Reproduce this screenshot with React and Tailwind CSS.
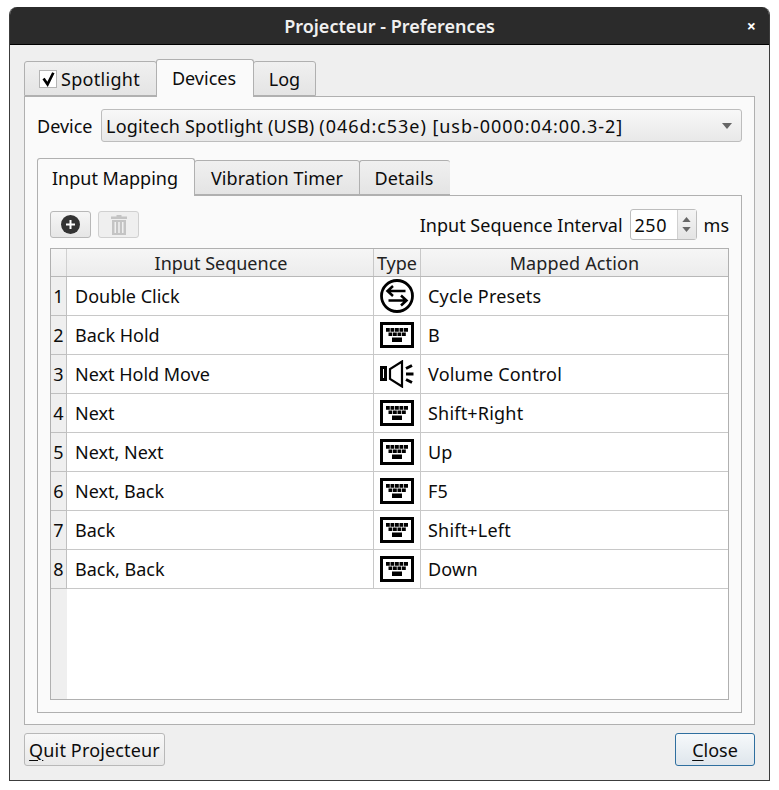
const FONT = "font-['Noto_Sans','Open_Sans',sans-serif]";

const ROWS = [
  { seq: "Double Click", type: "cycle", action: "Cycle Presets" },
  { seq: "Back Hold", type: "key", action: "B" },
  { seq: "Next Hold Move", type: "volume", action: "Volume Control" },
  { seq: "Next", type: "key", action: "Shift+Right" },
  { seq: "Next, Next", type: "key", action: "Up" },
  { seq: "Next, Back", type: "key", action: "F5" },
  { seq: "Back", type: "key", action: "Shift+Left" },
  { seq: "Back, Back", type: "key", action: "Down" },
];

function CycleIcon() {
  return (
    <svg width="34" height="34" viewBox="0 0 34 34" fill="none" stroke="#000">
      <circle cx="17" cy="17" r="15.500" strokeWidth="2.800" />
      <path d="M25.500 12H8M13 7l-5.500 5 5.500 5" strokeWidth="2.500" />
      <path d="M8.500 21.500H26M21 16.500l5.500 5-5.500 5" strokeWidth="2.500" />
    </svg>
  );
}

function KeyboardIcon() {
  return (
    <svg width="34" height="26" viewBox="0 0 34 26">
      <rect x="1.500" y="1.500" width="31" height="23" fill="none" stroke="#000" strokeWidth="3" />
      <path
        d="M6 6h3.800v3.800H6zM10.500 6h3.800v3.800h-3.800zM15 6h3.800v3.800H15zM19.500 6h3.800v3.800h-3.800zM24 6h4v3.800h-4zM8.500 10.500h3.800v3.500H8.500zM13 10.500h3.800v3.500H13zM17.500 10.500h3.800v3.500h-3.800zM22 10.500h3.800v3.500H22zM12 15.500h10V20H12z"
        fill="#000"
      />
    </svg>
  );
}

function VolumeIcon() {
  return (
    <svg width="34" height="28" viewBox="0 0 34 28" fill="none" stroke="#000">
      <rect x="1.500" y="7.500" width="4" height="12" strokeWidth="3" />
      <path d="M22 1.500v25L10 19V9z" strokeWidth="2.200" />
      <path d="m26 8.500 6-3M26 14h7.500M26 19.500l6 3" strokeWidth="3" />
    </svg>
  );
}

function TrashIcon() {
  return (
    <svg width="16" height="20" viewBox="0 0 16 20" fill="#c4c4c4">
      <path d="M5.500 0h5v1.500H16V4H0V1.500h5.500z" />
      <path d="M1 5h14v15H1zM3.500 7v11H5V7zm3.700 0v11h1.600V7zM11 7v11h1.500V7z" fillRule="evenodd" />
    </svg>
  );
}

function TypeIcon({ type }) {
  if (type === "cycle") return <CycleIcon />;
  if (type === "volume") return <VolumeIcon />;
  return <KeyboardIcon />;
}

function Tab({ active, children, className = "" }) {
  return (
    <div
      className={`flex items-center justify-center rounded-t-[3px] border border-[#b0b0b0] ${
        active
          ? "relative z-10 -mb-px border-b-0 bg-[#fafafa] pb-px"
          : "mt-[2px] bg-gradient-to-b from-[#f0f0f0] to-[#e4e4e4]"
      } ${className}`}
    >
      {children}
    </div>
  );
}

export default function App() {
  return (
    <div className={`h-[790px] w-[779px] bg-white pl-[9px] pt-[7px] text-[18px] leading-none text-[#0c0c0c] ${FONT}`}>
      <div className="flex h-[774px] w-[761px] flex-col overflow-hidden rounded-t-[8px] border-x border-b border-[#3c3c3c] bg-[#efefef]">
        {/* title bar */}
        <div className="relative -mx-px flex h-[38px] shrink-0 items-center justify-center border-b border-black bg-[#2b2b2b] text-[18px] font-semibold text-[#f0f0f0]">
          Projecteur - Preferences
          <span className="absolute right-[14px] top-[11px] text-[16px] font-bold text-white">×</span>
        </div>

        <div className="flex flex-1 flex-col px-[14px] pt-[14px]">
          {/* outer tabs */}
          <div className="flex h-[37px] shrink-0 items-stretch">
            <Tab className="w-[133px] gap-[4px] pt-px tracking-[0.3px]">
              <span className="-ml-[2px] flex h-[18px] w-[18px] items-center justify-center border border-[#b4b4b4] bg-white">
                <svg width="18" height="18" viewBox="0 0 18 18" fill="none" stroke="#000" strokeWidth="3">
                  <path d="m4 8.500 4.500 6.500L15 2" />
                </svg>
              </span>
              Spotlight
            </Tab>
            <Tab active className="-ml-px w-[98px] pr-[2px]">Devices</Tab>
            <Tab className="-ml-px w-[63px] pt-px">Log</Tab>
          </div>

          {/* outer pane */}
          <div className="flex h-[629px] w-[731px] shrink-0 flex-col border border-[#b0b0b0] bg-[#fafafa] px-[12px] pt-[12px]">
            <div className="flex h-[33px] shrink-0 items-center">
              <span className="w-[64px]">Device</span>
              <div className="flex h-[33px] w-[641px] items-center justify-between rounded-[3px] border border-[#bdbdbd] bg-gradient-to-b from-[#f8f8f8] to-[#e8e8e8] pl-[4px] pr-[9px]">
                <span>
                  <span className="tracking-[0.2px]">Logitech Spotlight (USB) </span>
                  <span className="tracking-[0.95px]">(046d:c53e) [usb-0000:04:00.3-2]</span>
                </span>
                <svg width="10" height="6" viewBox="0 0 10 6" fill="#666">
                  <path d="M0 0h10L5 6z" />
                </svg>
              </div>
            </div>

            {/* inner tabs */}
            <div className="mt-[16px] flex h-[37px] shrink-0 items-stretch">
              <Tab active className="w-[158px] pr-[2px] pt-px">Input Mapping</Tab>
              <Tab className="-ml-px w-[166px] tracking-[0.1px]">Vibration Timer</Tab>
              <Tab className="-ml-px w-[91px] border-r-0 pr-[2px] tracking-[0.2px]">Details</Tab>
            </div>

            {/* inner pane */}
            <div className="flex h-[518px] w-[705px] shrink-0 flex-col border border-[#b0b0b0] bg-[#fafafa] px-[12px]">
              <div className="flex h-[52px] shrink-0 items-start">
                <div className="mt-[15px] flex h-[27px] w-[41px] items-center justify-center rounded-[3px] border border-[#b8b8b8] bg-gradient-to-b from-[#f6f6f6] to-[#e6e6e6]">
                  <svg width="19" height="19" viewBox="0 0 19 19">
                    <circle cx="9.500" cy="9.500" r="9.500" fill="#333" />
                    <path d="M9.500 5v9M5 9.500h9" stroke="#fff" strokeWidth="2" />
                  </svg>
                </div>
                <div className="ml-[7px] mt-[15px] flex h-[27px] w-[41px] items-center justify-center rounded-[3px] border border-[#d0d0d0] bg-[#efefef]">
                  <TrashIcon />
                </div>
                <span className="ml-auto mt-[20px]">Input Sequence Interval</span>
                <div className="ml-[7px] mt-[13px] flex h-[31px] w-[67px] items-stretch rounded-[3px] border border-[#bdbdbd] bg-white">
                  <span className="flex flex-1 items-center pl-[4px] tracking-[0.5px]">250</span>
                  <div className="flex w-[19px] flex-col items-center justify-center gap-[5px] border-l border-[#d0d0d0] bg-gradient-to-b from-[#f4f4f4] to-[#e4e4e4]">
                    <svg width="9" height="5" viewBox="0 0 10 6" fill="#666"><path d="M5 0l5 6H0z" /></svg>
                    <svg width="9" height="5" viewBox="0 0 10 6" fill="#666"><path d="M5 6L0 0h10z" /></svg>
                  </div>
                </div>
                <span className="ml-[7px] mt-[20px]">ms</span>
              </div>

              {/* table */}
              <div className="flex h-[452px] w-[679px] shrink-0 flex-col border border-[#b0b0b0] bg-white">
                <div className="grid h-[28px] shrink-0 grid-cols-[16px_307px_47px_1fr] border-b border-[#b8b8b8] bg-gradient-to-b from-[#f6f6f6] to-[#ececec] text-center text-[#222]">
                  <div className="border-r border-[#d0d0d0]" />
                  <div className="flex items-center justify-center border-r border-[#c8c8c8] pl-[2px]">Input Sequence</div>
                  <div className="flex items-center justify-center border-r border-[#c8c8c8]">Type</div>
                  <div className="flex items-center justify-center tracking-[0.15px]">Mapped Action</div>
                </div>
                {ROWS.map((row, i) => (
                  <div key={i} className="grid h-[39px] shrink-0 grid-cols-[16px_307px_47px_1fr]">
                    <div className="flex items-center justify-center border-r border-b border-[#c0c0c0] bg-[#efefef]">{i + 1}</div>
                    <div className="flex items-center border-r border-b border-[#c8c8c8] pl-[8px]">{row.seq}</div>
                    <div className="flex items-center justify-center border-r border-b border-[#c8c8c8]">
                      <TypeIcon type={row.type} />
                    </div>
                    <div className="flex items-center border-b border-[#c8c8c8] pl-[7px] tracking-[0.2px]">{row.action}</div>
                  </div>
                ))}
                <div className="flex-1 bg-white">
                  <div className="h-full w-[16px] bg-[#efefef]" />
                </div>
              </div>
            </div>
          </div>

          {/* bottom buttons */}
          <div className="mt-[8px] flex justify-between">
            <button className="h-[33px] w-[141px] rounded-[3px] border border-[#b8b8b8] bg-gradient-to-b from-[#f8f8f8] to-[#e8e8e8] tracking-[0.15px]">
              <span className="underline decoration-1 underline-offset-[3px]">Q</span>uit Projecteur
            </button>
            <button className="h-[33px] w-[80px] rounded-[3px] border border-[#2f6f9f] bg-gradient-to-b from-[#f6f9fb] to-[#dfe6ec]">
              <span className="underline decoration-1 underline-offset-[3px]">C</span>lose
            </button>
          </div>
        </div>
      </div>
    </div>
  );
}
